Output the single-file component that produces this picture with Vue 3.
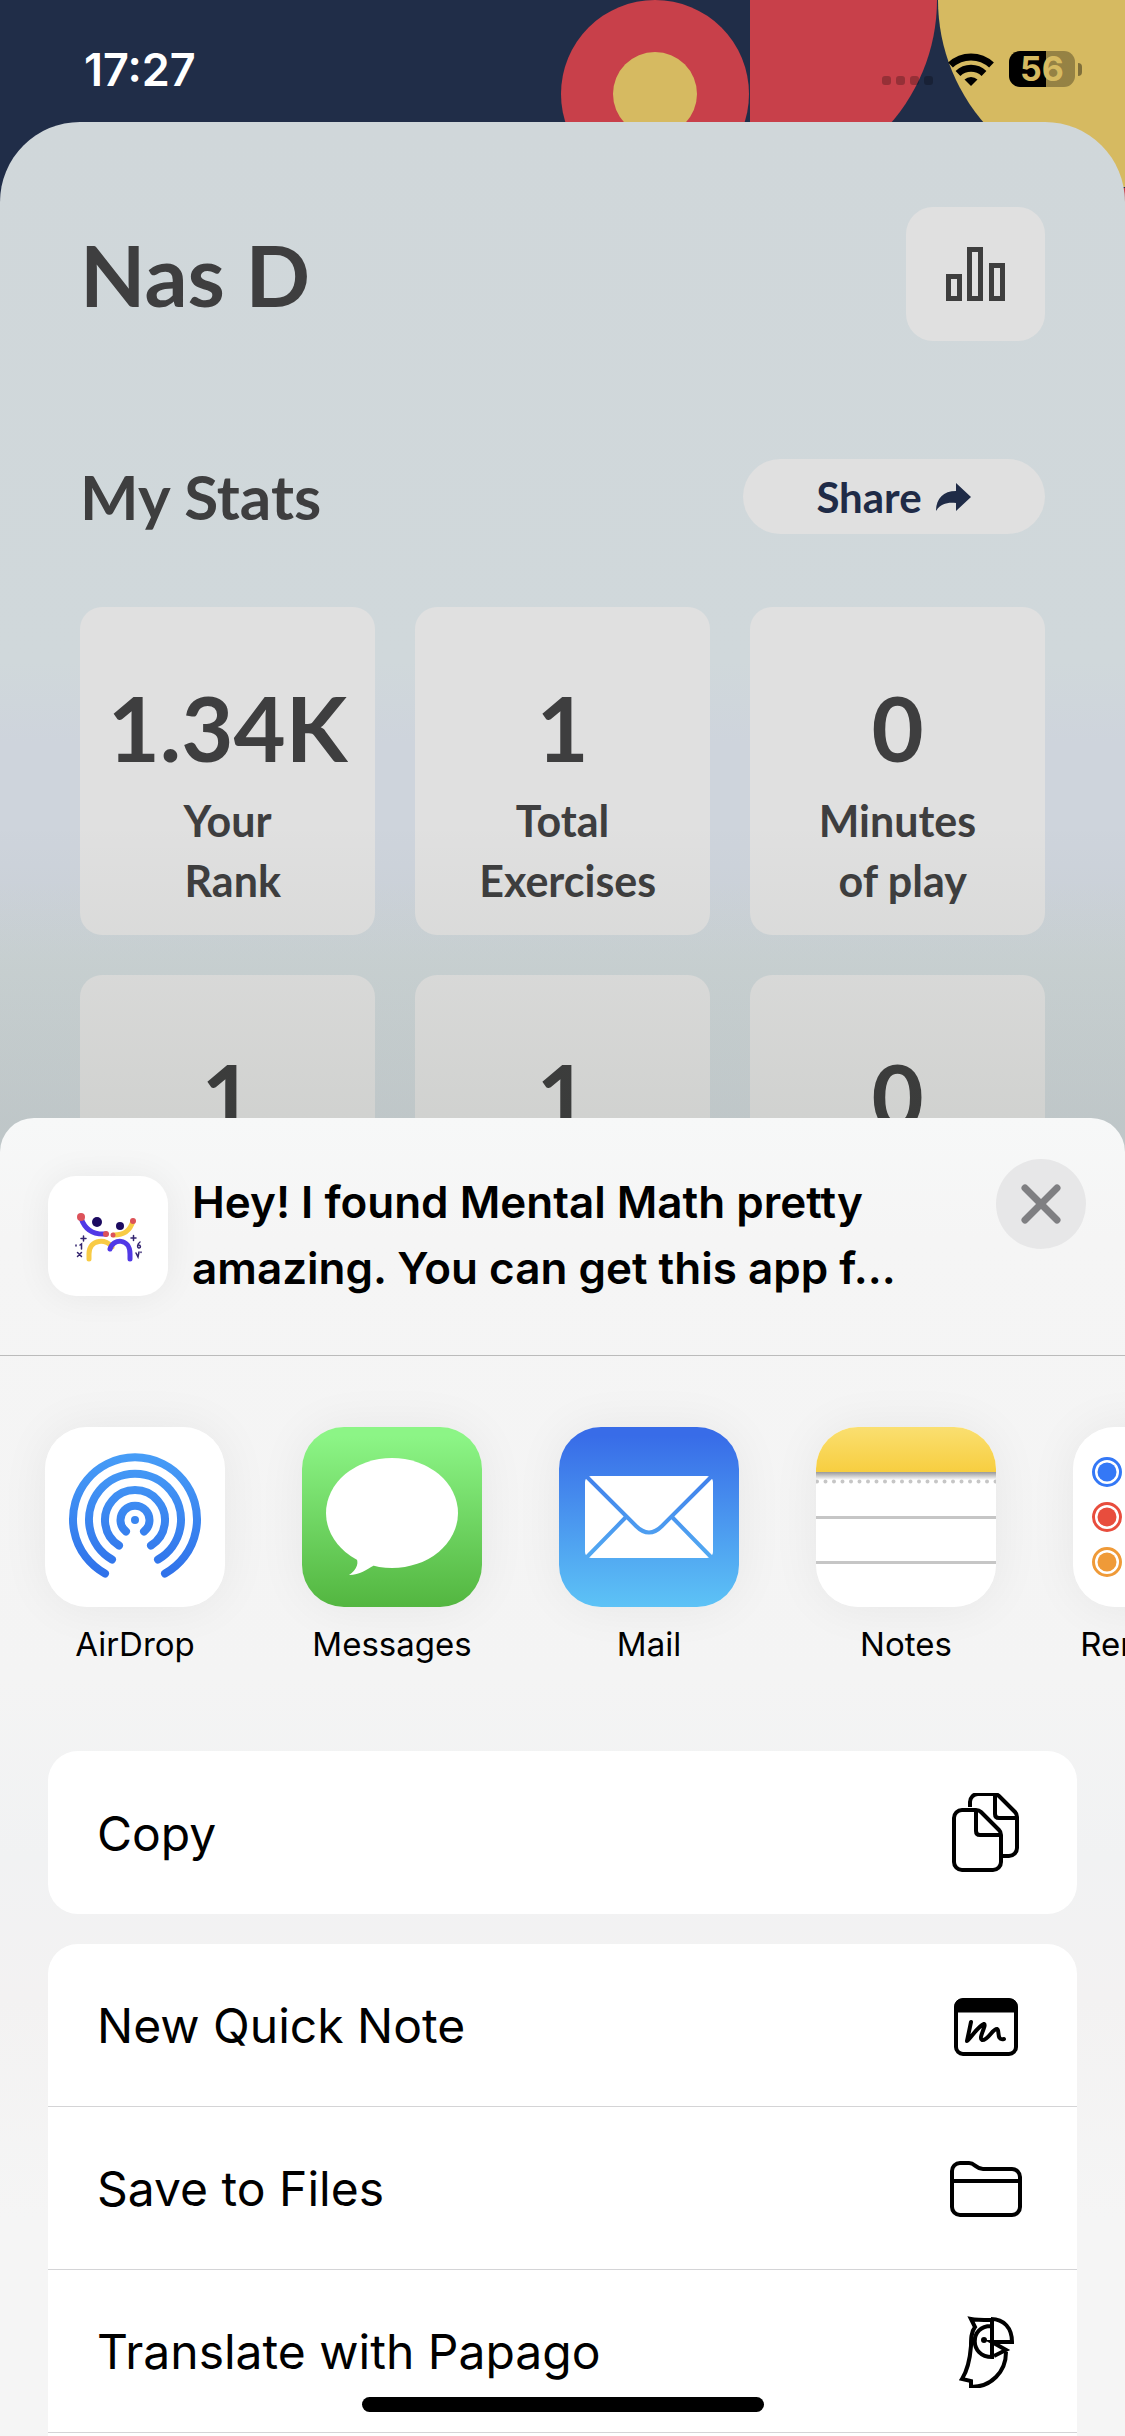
<template>
  <div class="screen">
    <div class="banner" aria-hidden="true">
      <svg width="564" height="240" viewBox="0 0 564 240">
        <circle cx="94" cy="94" r="94" fill="#c8404a" />
        <circle cx="94" cy="94" r="42" fill="#d6ba61" />
        <path d="M189 0h187a187 187 0 0 1-187 187z" fill="#c8404a" />
        <path d="M377 0h187v187a187 187 0 0 1-187-187z" fill="#d6ba61" />
        <rect x="377" y="188" width="187" height="52" fill="#c8404a" />
      </svg>
    </div>

    <header class="status-bar">
      <span class="time">17:27</span>
      <div class="indicators">
        <svg class="signal" width="51" height="9" viewBox="0 0 51 9">
          <rect v-for="n in 4" :key="n" :x="(n - 1) * 14" width="9" height="9" rx="3" fill="#000" opacity="0.25" />
        </svg>
        <svg width="46" height="34" viewBox="0 0 46 34">
          <path d="M23 34l-6.500-6.500a9.500 9.500 0 0 1 13 0z" fill="#000" />
          <g fill="none" stroke="#000" stroke-width="7">
            <path d="M10 21.500a19 19 0 0 1 26 0" />
            <path d="M2.500 13a30 30 0 0 1 41 0" />
          </g>
        </svg>
        <div class="battery">
          <span class="battery-level">56</span>
          <span class="battery-nub"></span>
        </div>
      </div>
    </header>

    <main class="profile">
      <div class="profile-header">
        <h1>Nas D</h1>
        <button class="chart-btn" aria-label="Leaderboard">
          <svg width="60" height="54" viewBox="0 0 60 54" fill="none" stroke="#3e3e3e" stroke-width="5">
            <rect x="2.500" y="29.500" width="11" height="22" />
            <rect x="23.500" y="2.500" width="11" height="49" />
            <rect x="45.500" y="18.500" width="11" height="33" />
          </svg>
        </button>
      </div>

      <div class="stats-header">
        <h2>My Stats</h2>
        <button class="share-btn">
          <span>Share</span>
          <svg width="36" height="28" viewBox="0 0 36 28" fill="#1f2b47">
            <path d="M20 0l15 14-15 14v-8C11 19 4 21 0 28 0 16 7 8 20 8z" />
          </svg>
        </button>
      </div>

      <div class="stats-grid">
        <div v-for="(stat, index) in stats" :key="index" class="stat-card">
          <span class="stat-value">{{ stat.value }}</span>
          <span class="stat-label">{{ stat.label }}</span>
        </div>
      </div>
    </main>

    <section class="sheet">
      <div class="sheet-header">
        <div class="app-icon">
          <svg width="120" height="120" viewBox="48 1176 120 120" fill="none" stroke-width="5" stroke-linecap="round">
            <path d="M81 1218c4 12 12 17 25 16" stroke="#5139e6" />
            <path d="M133 1221c-3 10-9 14-19 14" stroke="#f8cb45" />
            <path d="M89 1259v-5c0-16 19-15 23-7" stroke="#f8cb45" />
            <path d="M110 1249c3-11 20-11 20 5v5" stroke="#5139e6" />
            <g fill="#dc525a">
              <circle cx="81" cy="1217" r="4" />
              <circle cx="133" cy="1221" r="3" />
              <circle cx="106" cy="1234" r="3" />
              <circle cx="113" cy="1235" r="2.500" />
            </g>
            <g fill="#1c0a60">
              <circle cx="97" cy="1222" r="5" />
              <circle cx="120" cy="1226" r="4" />
            </g>
            <g stroke="#33246f" stroke-width="1.500">
              <path d="M81 1238.500h5M83.500 1236v5M131 1238h5M133.500 1235.500v5" />
              <path d="M77.500 1252.500l4 4M81.500 1252.500l-4 4" />
              <path d="M76 1245v1M80 1245l1.500-1v5M140 1242c-3 2-3 6-1 6s2-3-.5-3M136 1253l2 4 1-5M141 1252v.5" />
            </g>
          </svg>
        </div>
        <p class="share-text">Hey! I found Mental Math pretty<br />amazing. You can get this app f...</p>
        <button class="close-btn" aria-label="Close">
          <svg width="44" height="44" viewBox="0 0 44 44" stroke="#7f7f82" stroke-width="7" stroke-linecap="round">
            <line x1="6" y1="6" x2="38" y2="38" />
            <line x1="38" y1="6" x2="6" y2="38" />
          </svg>
        </button>
      </div>

      <div class="apps">
        <button v-for="app in apps" :key="app" class="app">
          <span class="app-tile">
            <svg v-if="app === 'AirDrop'" width="180" height="180" viewBox="0 0 180 180">
              <defs>
                <linearGradient id="airdrop" gradientUnits="userSpaceOnUse" x1="0" y1="27" x2="0" y2="150">
                  <stop offset="0" stop-color="#479df7" />
                  <stop offset="1" stop-color="#2f71ea" />
                </linearGradient>
              </defs>
              <rect width="180" height="180" fill="#fff" />
              <g fill="none" stroke="url(#airdrop)" stroke-width="8" stroke-linecap="round">
                <path d="M60 146.500A62 62 0 1 1 120 146.500" />
                <path d="M67 132.500A46 46 0 1 1 113 132.500" />
                <path d="M74 118.500A30 30 0 1 1 106 118.500" />
                <path d="M81 104.500A14.500 14.500 0 1 1 99 104.500" />
              </g>
              <circle cx="90" cy="93" r="4" fill="#3a86f0" />
            </svg>

            <svg v-else-if="app === 'Messages'" width="180" height="180" viewBox="0 0 180 180">
              <defs>
                <linearGradient id="messages" x1="0" y1="0" x2="0" y2="1">
                  <stop offset="0.05" stop-color="#8cf586" />
                  <stop offset="1" stop-color="#53b640" />
                </linearGradient>
              </defs>
              <rect width="180" height="180" fill="url(#messages)" />
              <ellipse cx="90" cy="86" rx="66" ry="55" fill="#fff" />
              <path d="M53 130c5 4 2 13-6 18 11 0 18-6 24-9l9-14-20-8z" fill="#fff" />
            </svg>

            <svg v-else-if="app === 'Mail'" width="180" height="180" viewBox="0 0 180 180">
              <defs>
                <linearGradient id="mail" gradientUnits="userSpaceOnUse" x1="0" y1="0" x2="0" y2="180">
                  <stop offset="0.05" stop-color="#386ce8" />
                  <stop offset="1" stop-color="#5dc3f6" />
                </linearGradient>
              </defs>
              <rect width="180" height="180" fill="url(#mail)" />
              <rect x="26" y="49" width="128" height="82" rx="6" fill="#fff" />
              <g fill="none" stroke="url(#mail)" stroke-width="4">
                <path d="M27 49l50 50q13 13 26 0l50-50" />
                <path d="M27 131l40-41M153 131l-40-41" />
              </g>
            </svg>

            <svg v-else-if="app === 'Notes'" width="180" height="180" viewBox="0 0 180 180">
              <defs>
                <linearGradient id="notes" x1="0" y1="0" x2="0" y2="1">
                  <stop offset="0" stop-color="#fadf70" />
                  <stop offset="1" stop-color="#f7ce40" />
                </linearGradient>
                <linearGradient id="fold" x1="0" y1="0" x2="0" y2="1">
                  <stop offset="0" stop-color="#999" />
                  <stop offset="1" stop-color="#fff" />
                </linearGradient>
              </defs>
              <rect width="180" height="180" fill="#fff" />
              <rect width="180" height="45" fill="url(#notes)" />
              <rect y="45" width="180" height="8" fill="url(#fold)" />
              <line x1="1" y1="54.500" x2="180" y2="54.500" stroke="#c6c6c6" stroke-width="4" stroke-linecap="round" stroke-dasharray="0 8.500" />
              <path d="M0 90.500h180M0 135.500h180" stroke="#c6c6c6" stroke-width="3" />
            </svg>

            <svg v-else width="180" height="180" viewBox="0 0 180 180">
              <rect width="180" height="180" fill="#fff" />
              <g v-for="(color, row) in reminderColors" :key="color">
                <circle cx="34" :cy="45 + row * 45" r="13.500" fill="none" :stroke="color" stroke-width="3" />
                <circle cx="34" :cy="45 + row * 45" r="9.500" :fill="color" />
                <rect x="62" :y="44 + row * 45" width="118" height="3" fill="#c6c6c6" />
              </g>
            </svg>
          </span>
          <span class="app-name">{{ app }}</span>
        </button>
      </div>

      <div class="actions">
        <div class="action-group">
          <button class="action">
            <span>Copy</span>
            <svg width="72" height="80" viewBox="1 1 72 80" fill="none" stroke="#000" stroke-width="4" stroke-linejoin="round">
              <path d="M21 15V10a8 8 0 0 1 8-8h16q3 0 5 2l16 16q2 2 2 5v31a8 8 0 0 1-8 8h-8" />
              <path d="M46 3v19q0 4 4 4h17" />
              <path d="M5 26a8 8 0 0 1 8-8h14q3 0 5 2l18 18q2 2 2 5v27a8 8 0 0 1-8 8H13a8 8 0 0 1-8-8z" />
              <path d="M27 19v20q0 4 4 4h20" />
            </svg>
          </button>
        </div>

        <div class="action-group last">
          <button class="action">
            <span>New Quick Note</span>
            <svg width="72" height="60" viewBox="0 -1 72 60" fill="none" stroke="#000">
              <rect x="6" y="3" width="60" height="54" rx="7" stroke-width="4" />
              <path d="M5 15V9a7 7 0 0 1 7-7h48a7 7 0 0 1 7 7v6z" fill="#000" />
              <path d="M21 25l-4 19c5-4 11-15 17-17 3 1-6 14-2 16 6 1 10-11 15-11 3 1-1 12 7 10" stroke-width="4" stroke-linecap="round" stroke-linejoin="round" />
            </svg>
          </button>
          <button class="action">
            <span>Save to Files</span>
            <svg width="72" height="60" viewBox="0 -1 72 60" fill="none" stroke="#000" stroke-width="4">
              <path d="M2 11a8 8 0 0 1 8-8h9c6 0 7 6 14 6h29a8 8 0 0 1 8 8v30a8 8 0 0 1-8 8H10a8 8 0 0 1-8-8z" />
              <line x1="2" y1="21" x2="70" y2="21" />
            </svg>
          </button>
          <button class="action">
            <span>Translate with Papago</span>
            <svg width="72" height="72" viewBox="950 2317 72 72" fill="none" stroke="#000" stroke-width="4">
              <path d="M991 2321c-7 0-15 0-20-1l4 8c-4 5-4 12-4 19-1 13-4 25-9 33l9 2v6c20 0 35-15 35-35" />
              <path d="M991 2320c13 0 21 9 21 23h-20l14 8-12 6" />
              <path d="M992 2320v38c-23 0-23-32 0-31" />
              <circle cx="984" cy="2341" r="3" fill="#000" stroke="none" />
            </svg>
          </button>
        </div>
      </div>
      <div class="home-bar"></div>
    </section>
  </div>
</template>

<script setup>
// the second label line keeps its leading space
const stats = [
  { value: '1.34K', label: 'Your\n Rank' },
  { value: '1', label: 'Total\n Exercises' },
  { value: '0', label: 'Minutes\n of play' },
  { value: '1', label: '' },
  { value: '1', label: '' },
  { value: '0', label: '' }
]

const apps = ['AirDrop', 'Messages', 'Mail', 'Notes', 'Reminders']

const reminderColors = ['#3478f6', '#e84d3d', '#ef9a38']
</script>

<style>
body {
  margin: 0;
}
</style>

<style scoped>
.screen {
  position: relative;
  box-sizing: border-box;
  height: 100vh;
  overflow: hidden;
  background: #202d48;
  font-family: Inter, "Liberation Sans", sans-serif;
}

button {
  padding: 0;
  border: none;
  font: inherit;
  color: inherit;
  cursor: pointer;
}

svg {
  display: block;
  flex: none;
}

/* Banner and status bar */
.banner {
  position: absolute;
  top: 0;
  right: 0;
}

.status-bar {
  position: relative;
  display: flex;
  align-items: center;
  justify-content: space-between;
  box-sizing: border-box;
  height: 122px;
  padding: 16px 43px 0 84px;
}

.time {
  font-size: 45px;
  font-weight: 600;
  color: #ffffff;
}

.indicators {
  display: flex;
  align-items: center;
  gap: 15px;
}

.signal {
  margin-top: 22px;
}

.battery {
  display: flex;
  align-items: center;
  gap: 3px;
}

.battery-level {
  width: 66px;
  border-radius: 11px;
  background: linear-gradient(90deg, #000000 56%, rgba(0, 0, 0, 0.3) 56%);
  font-size: 34px;
  font-weight: 700;
  line-height: 36px;
  text-align: center;
  color: #d6ba61;
}

.battery-nub {
  width: 4px;
  height: 13px;
  border-radius: 0 6px 6px 0;
  background: rgba(0, 0, 0, 0.4);
}

/* Profile */
.profile {
  position: relative;
  box-sizing: border-box;
  min-height: 100vh;
  padding: 85px 80px 0;
  border-radius: 80px 80px 0 0;
  background: linear-gradient(#d0d7da 0, #d0d8db 540px, #ced4dc 620px, #ced4dc 760px, #cdd5d7 840px, #cdd4d8 1000px);
  font-family: Lato, "Liberation Sans", sans-serif;
  font-weight: 700;
  color: #3e3e3f;
}

/* shade that deepens towards the share sheet */
.profile::after {
  content: "";
  position: absolute;
  inset: 0;
  background: linear-gradient(rgba(25, 40, 15, 0) 700px, rgba(25, 40, 15, 0.08) 1000px);
  pointer-events: none;
}

.profile-header,
.stats-header {
  display: flex;
  align-items: center;
  justify-content: space-between;
}

.profile-header {
  margin-bottom: 118px;
}

h1,
h2 {
  margin: 0;
  font-weight: 700;
}

h1 {
  font-size: 85px;
}

h2 {
  font-size: 62px;
  line-height: 75px;
}

.chart-btn {
  display: flex;
  align-items: center;
  justify-content: center;
  width: 139px;
  height: 134px;
  border-radius: 27px;
  background: #e0e0e0;
}

.share-btn {
  display: flex;
  align-items: center;
  justify-content: center;
  gap: 14px;
  width: 302px;
  height: 75px;
  border-radius: 38px;
  background: #e0e0e0;
  font-size: 42px;
  color: #1f2b47;
}

.stats-grid {
  display: grid;
  grid-template-columns: repeat(3, 1fr);
  gap: 40px;
  margin-top: 73px;
}

.stat-card {
  display: flex;
  flex-direction: column;
  align-items: center;
  box-sizing: border-box;
  height: 328px;
  padding-top: 70px;
  border-radius: 22px;
  background: #e0e0e0;
}

.stat-value {
  font-size: 90px;
  line-height: 100px;
}

.stat-label {
  margin-top: 14px;
  font-size: 43px;
  line-height: 60px;
  text-align: center;
  white-space: pre;
}

/* Share sheet */
.sheet {
  position: absolute;
  right: 0;
  bottom: 0;
  left: 0;
  border-radius: 34px 34px 0 0;
  background: linear-gradient(#f7f8f8 0, #f5f5f5 120px, #f4f4f4 560px, #f1f2f3 740px, #f3f2f2 880px, #f5f5f5 1100px);
  color: #000000;
}

.sheet-header {
  display: flex;
  align-items: flex-start;
  box-sizing: border-box;
  height: 238px;
  padding: 41px 39px 0 48px;
  border-bottom: 1px solid #bbbbbb;
}

.app-icon {
  flex: none;
  margin-top: 17px;
  border-radius: 28px;
  background: #ffffff;
  box-shadow: 0 0 36px rgba(0, 0, 0, 0.06);
}

.share-text {
  flex: 1;
  margin: 10px 0 0 24px;
  font-size: 44px;
  font-weight: 600;
  line-height: 66px;
  white-space: nowrap;
}

.close-btn {
  display: flex;
  flex: none;
  align-items: center;
  justify-content: center;
  width: 90px;
  height: 90px;
  border-radius: 50%;
  background: #e7e7e8;
}

.apps {
  display: flex;
  gap: 77px;
  padding: 71px 0 85px 45px;
  overflow: hidden;
}

.app {
  display: flex;
  flex: none;
  flex-direction: column;
  align-items: center;
  gap: 16px;
  width: 180px;
  background: none;
}

.app-tile {
  border-radius: 42px;
  box-shadow: 0 0 50px rgba(0, 0, 0, 0.06);
}

.app-tile svg {
  border-radius: 42px;
}

.app-name {
  font-size: 33px;
  line-height: 43px;
}

.actions {
  display: flex;
  flex-direction: column;
  gap: 30px;
  padding: 0 48px;
}

.action-group {
  border-radius: 30px;
  background: #ffffff;
  overflow: hidden;
}

.action-group.last {
  padding-bottom: 3px;
  border-radius: 30px 30px 0 0;
}

.action {
  display: flex;
  align-items: center;
  justify-content: space-between;
  box-sizing: border-box;
  width: 100%;
  height: 163px;
  padding: 1px 55px 0 49px;
  background: none;
  font-size: 48px;
}

.last .action {
  border-bottom: 1px solid #d4d4d6;
}

.home-bar {
  position: absolute;
  bottom: 24px;
  left: 50%;
  width: 402px;
  height: 15px;
  border-radius: 8px;
  background: #000000;
  transform: translateX(-50%);
}
</style>
